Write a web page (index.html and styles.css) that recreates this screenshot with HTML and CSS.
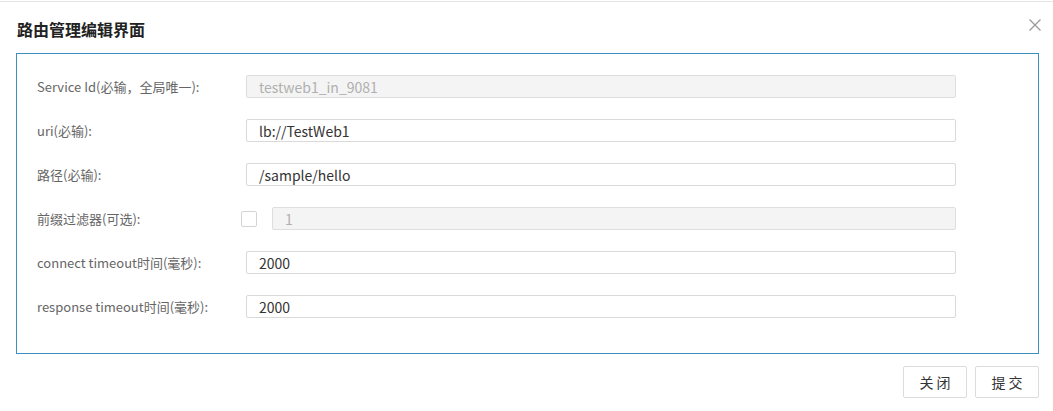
FILE: index.html
```html
<!DOCTYPE html>
<html lang="zh">
<head>
<meta charset="utf-8">
<title>路由管理编辑界面</title>
<link rel="stylesheet" href="styles.css">
</head>
<body>
<div class="dialog">
  <div class="header">
    <h1 class="title">路由管理编辑界面</h1>
    <span class="close" aria-label="close">
      <svg width="12" height="12" viewBox="0 0 12 12"><path d="M0.5 0.5 L11.5 11.5 M11.5 0.5 L0.5 11.5" stroke="#999" stroke-width="1.3" fill="none"/></svg>
    </span>
  </div>
  <div class="panel">
    <div class="row">
      <label class="label">Service Id(必输，全局唯一):</label>
      <div class="field"><input class="input" type="text" value="testweb1_in_9081" disabled></div>
    </div>
    <div class="row">
      <label class="label">uri(必输):</label>
      <div class="field"><input class="input" type="text" value="lb://TestWeb1"></div>
    </div>
    <div class="row">
      <label class="label">路径(必输):</label>
      <div class="field"><input class="input" type="text" value="/sample/hello"></div>
    </div>
    <div class="row">
      <label class="label">前缀过滤器(可选):</label>
      <div class="field field-check"><span class="checkbox"></span><input class="input" type="text" value="1" disabled></div>
    </div>
    <div class="row">
      <label class="label">connect timeout时间(毫秒):</label>
      <div class="field"><input class="input" type="text" value="2000"></div>
    </div>
    <div class="row">
      <label class="label">response timeout时间(毫秒):</label>
      <div class="field"><input class="input" type="text" value="2000"></div>
    </div>
  </div>
  <div class="footer">
    <button class="btn" type="button">关 闭</button>
    <button class="btn" type="button">提 交</button>
  </div>
</div>
</body>
</html>
```
FILE: styles.css
```css
html, body {
  margin: 0;
  padding: 0;
  background: #fff;
}
body {
  padding-top: 1px;
  font-family: "Noto Sans CJK SC", "Noto Sans", sans-serif;
  color: #333;
}
.dialog {
  border-top: 1px solid #e5e5e5;
  width: 1053px;
}
.header {
  height: 51px;
  display: flex;
  align-items: center;
  justify-content: space-between;
  padding: 0 12px 0 17px;
  box-sizing: border-box;
}
.title {
  margin: 0;
  font-size: 16px;
  font-weight: bold;
  color: #222;
  line-height: 20px;
  position: relative;
  top: 1px;
}
.close {
  display: flex;
  width: 12px;
  height: 12px;
  position: relative;
  top: -3px;
}
.panel {
  margin-left: 16px;
  width: 1023px;
  height: 301px;
  box-sizing: border-box;
  border: 1px solid #3d8fc0;
  padding: 21px 0 0 20px;
  display: flex;
  flex-direction: column;
  gap: 21px;
}
.row {
  display: flex;
  align-items: center;
  height: 23px;
}
.label {
  width: 209px;
  flex: none;
  font-size: 13px;
  color: #666;
}
.field {
  width: 710px;
  display: flex;
  align-items: center;
}
.field-check {
  margin-left: -5px;
  width: 715px;
}
.checkbox {
  width: 16px;
  height: 16px;
  box-sizing: border-box;
  border: 1px solid #d4d4d4;
  border-radius: 2px;
  margin-right: 15px;
  flex: none;
  background: #fff;
}
.input {
  flex: 1;
  min-width: 0;
  height: 23px;
  box-sizing: border-box;
  border: 1px solid #d9d9d9;
  border-radius: 2px;
  padding: 0 12px;
  font-family: "Noto Sans CJK SC", "Noto Sans", sans-serif;
  font-size: 14px;
  color: #333;
  background: #fff;
  outline: none;
  margin: 0;
}
.input:disabled {
  background: #f4f4f4;
  color: #b0b0b0;
  border-color: #dedede;
}
.footer {
  display: flex;
  justify-content: flex-end;
  gap: 8px;
  padding: 12px 14px 0 0;
}
.btn {
  width: 64px;
  height: 32px;
  border: 1px solid #dcdcdc;
  border-radius: 2px;
  background: #fff;
  color: #333;
  font-family: "Noto Sans CJK SC", "Noto Sans", sans-serif;
  font-size: 14px;
  padding: 0;
  margin: 0;
}
```
